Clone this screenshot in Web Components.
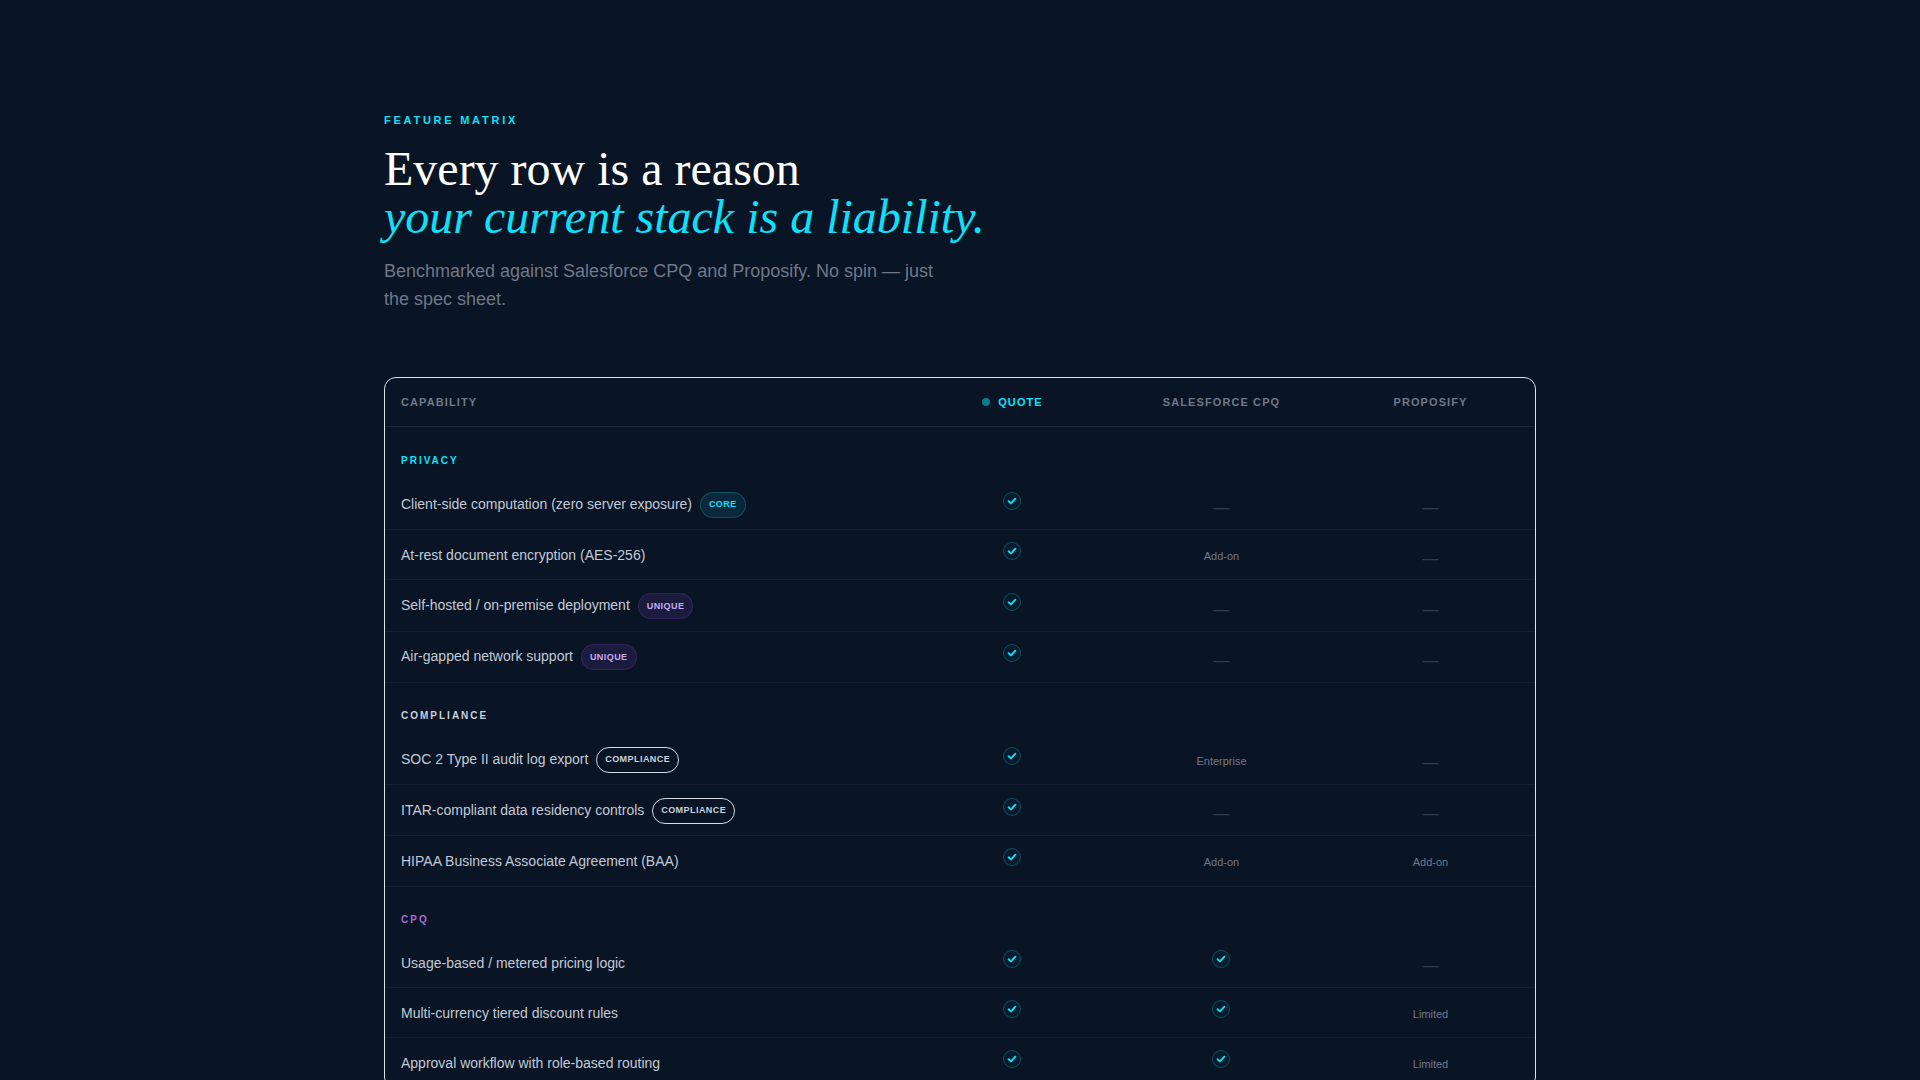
<!DOCTYPE html>
<html lang="en"><head><meta charset="utf-8"><title>Feature Matrix</title>
<style>
html,body{margin:0;background:#091425;}
body{font-family:"Liberation Sans",Arial,sans-serif;}
</style></head><body>
<matrix-page>
  <matrix-hero slot="hero"></matrix-hero>
  <matrix-table>
    <matrix-head></matrix-head>
    <matrix-section tone="cyan">PRIVACY</matrix-section>
    <matrix-row sf="dash" pr="dash">Client-side computation (zero server exposure) <matrix-badge kind="core">CORE</matrix-badge></matrix-row>
    <matrix-row sf="Add-on" pr="dash">At-rest document encryption (AES-256)</matrix-row>
    <matrix-row sf="dash" pr="dash">Self-hosted / on-premise deployment <matrix-badge kind="unique">UNIQUE</matrix-badge></matrix-row>
    <matrix-row sf="dash" pr="dash">Air-gapped network support <matrix-badge kind="unique">UNIQUE</matrix-badge></matrix-row>
    <matrix-section tone="light">COMPLIANCE</matrix-section>
    <matrix-row sf="Enterprise" pr="dash">SOC 2 Type II audit log export <matrix-badge kind="compliance">COMPLIANCE</matrix-badge></matrix-row>
    <matrix-row sf="dash" pr="dash">ITAR-compliant data residency controls <matrix-badge kind="compliance">COMPLIANCE</matrix-badge></matrix-row>
    <matrix-row sf="Add-on" pr="Add-on">HIPAA Business Associate Agreement (BAA)</matrix-row>
    <matrix-section tone="purple">CPQ</matrix-section>
    <matrix-row sf="check" pr="dash">Usage-based / metered pricing logic</matrix-row>
    <matrix-row sf="check" pr="Limited">Multi-currency tiered discount rules</matrix-row>
    <matrix-row sf="check" pr="Limited">Approval workflow with role-based routing</matrix-row>
  </matrix-table>
</matrix-page>
<script>
function def(name, html){
  customElements.define(name, class extends HTMLElement{
    connectedCallback(){
      if(this.shadowRoot) return;
      const r=this.attachShadow({mode:'open'});
      r.innerHTML = typeof html==='function'? html(this): html;
    }
  });
}
const CY='#0ce1fb';
const cols='grid-template-columns:1fr 209px 209px 209px;';
def('matrix-page',`<style>:host{display:block}
.wrap{max-width:1152px;margin:0 auto;padding:112px 0 80px;}</style>
<div class="wrap"><slot name="hero"></slot><slot></slot></div>`);
def('matrix-hero',`<style>:host{display:block;margin-bottom:64px}
.eye{font-size:11px;font-weight:700;letter-spacing:.25em;color:${CY};line-height:16px}
h1{margin:17px 0 0;font:400 48px/48px "Liberation Serif","Times New Roman",serif;color:#fff}
em{display:block;color:${CY};font-style:italic}
p{margin:16px 0 0;max-width:560px;font-size:18px;line-height:28px;color:#6f7887}</style>
<div class="eye">FEATURE MATRIX</div>
<h1>Every row is a reason<em>your current stack is a liability.</em></h1>
<p>Benchmarked against Salesforce CPQ and Proposify. No spin — just<br>the spec sheet.</p>`);
def('matrix-table',`<style>:host{display:block;border:1px solid #dbe3ea;border-radius:12px;overflow:hidden}</style><slot></slot>`);
def('matrix-head',`<style>:host{display:grid;${cols}box-sizing:border-box;height:49px;padding-bottom:1px;border-bottom:1px solid rgba(255,255,255,.08);align-items:center;font-size:11px;font-weight:700;letter-spacing:.1em;color:#6f7887}
div{text-align:center}div.f{text-align:left;padding-left:16px}
.q{color:${CY};display:flex;justify-content:center;align-items:center;gap:8px}
i{width:8px;height:8px;border-radius:50%;background:${CY};opacity:.5}</style>
<div class="f">CAPABILITY</div><div class="q"><i></i>QUOTE</div><div>SALESFORCE CPQ</div><div>PROPOSIFY</div>`);
def('matrix-section',h=>{const c={cyan:CY,light:'#c8d0da',purple:'#a66bdc'}[h.getAttribute('tone')];
return `<style>:host{display:block;box-sizing:border-box;height:51.2px;padding:24px 16px 0;font-size:10px;font-weight:700;letter-spacing:.2em;line-height:17px;color:${c}}
:host(:first-of-type){height:52.2px;padding-top:25px}</style><slot></slot>`});
const CHECK=`<svg width="18" height="18" viewBox="0 0 18 18" fill="none" aria-hidden="true"><circle cx="9" cy="9" r="8.5" fill="rgba(12,225,251,.04)" stroke="rgba(12,225,251,.28)"/><path d="M5.6 9.2 8 11.4 12.4 6.7" stroke="${CY}" stroke-width="1.9" stroke-linecap="round" stroke-linejoin="round"/></svg>`;
function cell(v){
  if(v==='check') return `<div class="c ck">${CHECK}</div>`;
  if(v==='dash') return `<div class="c dash">—</div>`;
  return `<div class="c note">${v}</div>`;
}
def('matrix-row',h=>{const b=!!h.querySelector('matrix-badge');return `<style>:host{display:grid;${cols}box-sizing:border-box;height:${b?51.2:50.1}px;border-bottom:1px solid rgba(255,255,255,.05);align-items:center;color:#c3cad5;font-size:14px;line-height:21px}
.t{padding:${b?1:2}px 16px 0;display:flex;align-items:center;gap:8px}
::slotted(*){flex:none}
.c{text-align:center}
.ck{display:flex;justify-content:center;padding:0 1px 7px 0}
.dash{font-size:16px;color:#323c4b;padding-top:7px}
.note{font-size:11px;color:#6f7887;padding-top:4px}
svg{display:block}</style>
<div class="t"><span><slot></slot></span></div>${cell('check')}${cell(h.getAttribute('sf'))}${cell(h.getAttribute('pr'))}`});
def('matrix-badge',h=>{const s={core:'background:rgba(12,225,251,.1);border:1px solid rgba(12,225,251,.22);color:'+CY,
unique:'background:rgba(168,85,247,.12);border:1px solid rgba(168,85,247,.16);color:#c8aaf0',
compliance:'background:transparent;border:1px solid #d4dbe3;color:#cbd2dc'}[h.getAttribute('kind')];
return `<style>:host{display:inline-flex;box-sizing:border-box;height:26px;align-items:center;padding:0 8px;border-radius:13px;font-size:9px;font-weight:700;letter-spacing:.05em;line-height:1;vertical-align:middle;margin-left:4px;${s}}</style><slot></slot>`});
</script>
</body></html>
